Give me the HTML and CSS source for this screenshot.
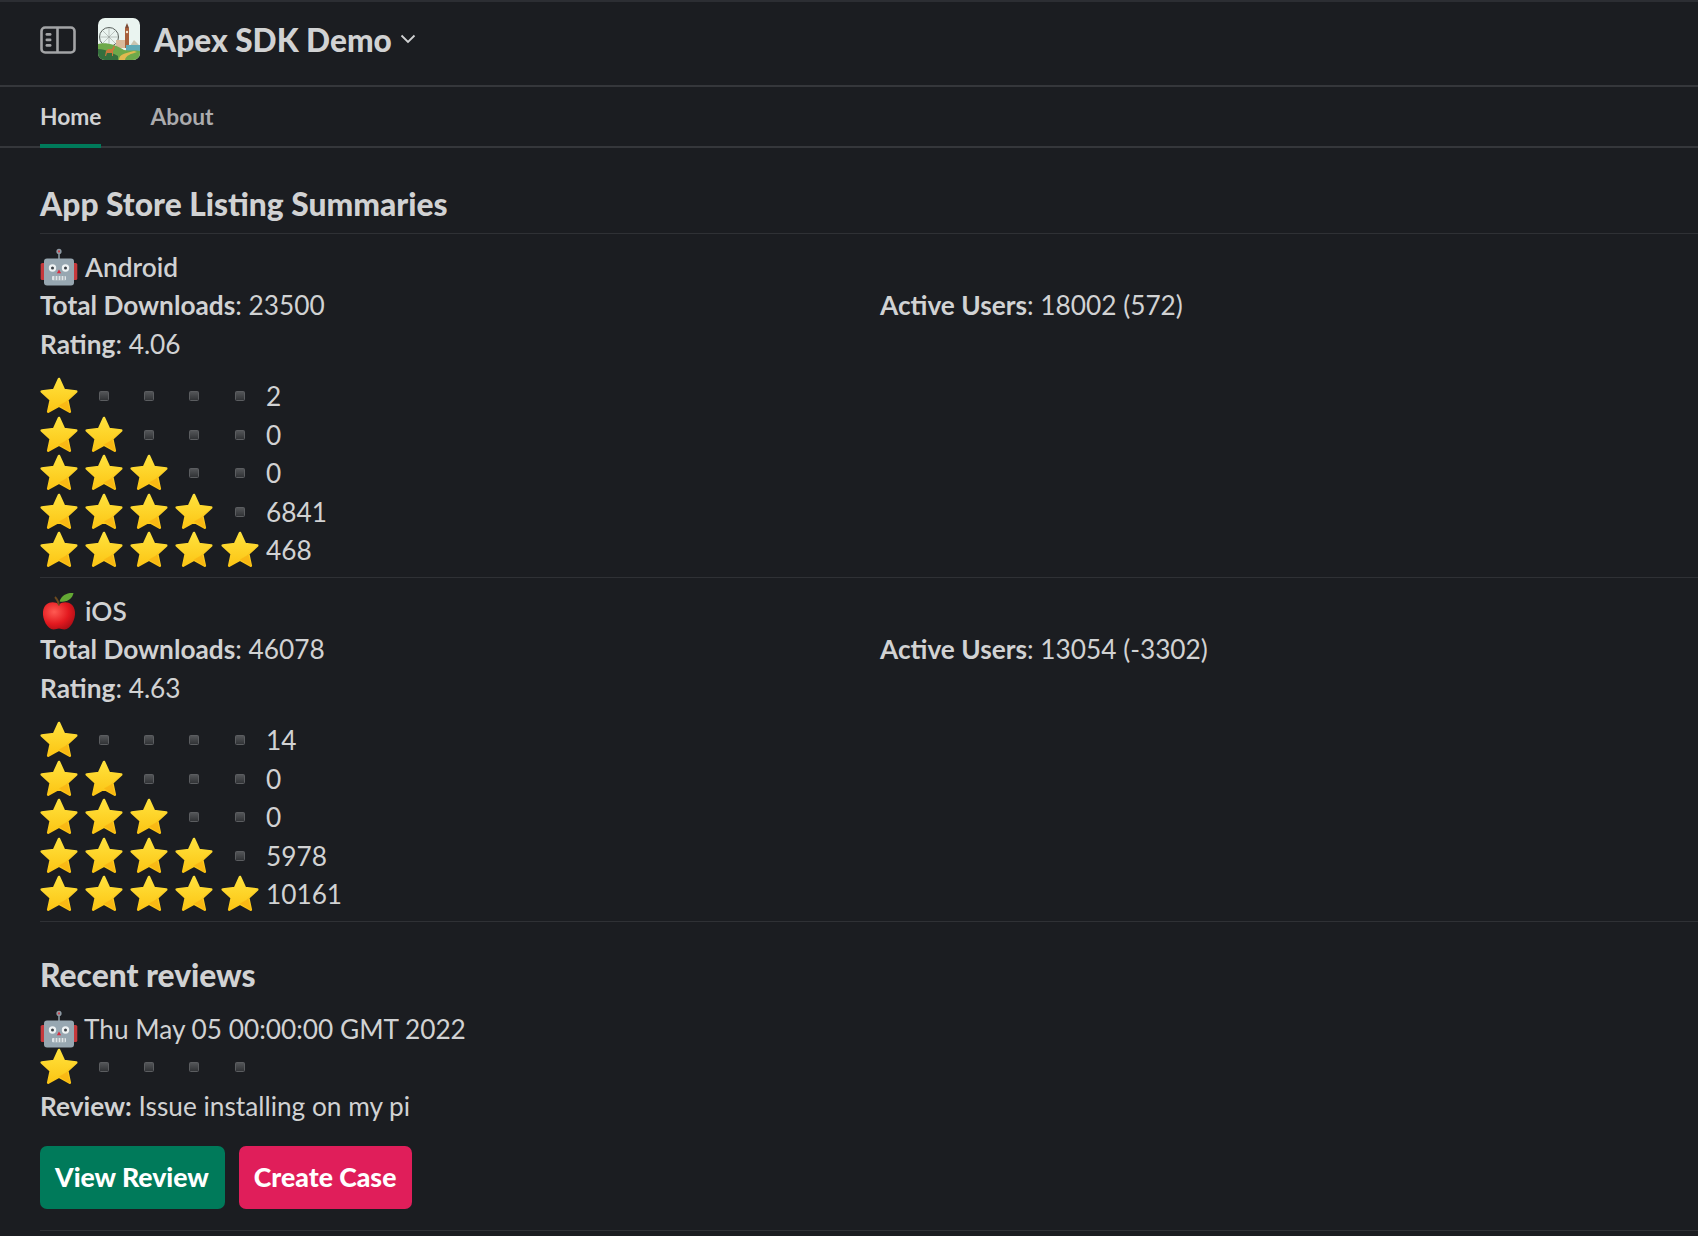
FILE: index.html
```html
<!DOCTYPE html>
<html lang="en">
<head>
<meta charset="utf-8">
<title>Apex SDK Demo</title>
<link rel="stylesheet" href="styles.css">
</head>
<body>
<svg class="defs" width="0" height="0" aria-hidden="true">
  <defs>
    <linearGradient id="starFill" x1="0" y1="0" x2="0" y2="1">
      <stop offset="0" stop-color="#ffe23d"/><stop offset="1" stop-color="#fcc514"/>
    </linearGradient>
    <linearGradient id="squareFill" x1="0" y1="0" x2="0" y2="1">
      <stop offset="0" stop-color="#55575a"/><stop offset="1" stop-color="#2f3134"/>
    </linearGradient>
    <radialGradient id="appleFill" cx="0.35" cy="0.35" r="0.75">
      <stop offset="0" stop-color="#ff5a52"/><stop offset="0.6" stop-color="#e3191f"/><stop offset="1" stop-color="#a80d15"/>
    </radialGradient>
    <symbol id="star" viewBox="0 0 38 38">
      <path d="M19 2 24 13 36.200 14.500 27.200 22.800 29.800 34.700 19 28.600 8.200 34.700 10.800 22.800 1.800 14.500 14 13Z" fill="url(#starFill)" stroke="url(#starFill)" stroke-width="2.600" stroke-linejoin="round"/>
      <path d="M37 14.600 27.200 22.800 30.200 35.200 19 28.600 25.500 24.800Z" fill="#f5a90f" opacity=".55"/>
    </symbol>
    <symbol id="square" viewBox="0 0 10 10">
      <rect x=".5" y=".5" width="9" height="9" rx="1" fill="url(#squareFill)" stroke="#5b5d60"/>
    </symbol>
    <symbol id="robot" viewBox="0 0 38 38">
      <path d="M19 3v8" stroke="#8d9aa3" stroke-width="1.600"/>
      <circle cx="19" cy="3.400" r="2.600" fill="#8d9aa3"/><circle cx="19" cy="3.400" r="1.100" fill="#c9414a"/>
      <rect x=".7" y="15" width="6" height="17" rx="1.600" fill="#c6393c"/>
      <rect x="31.300" y="15" width="6" height="17" rx="1.600" fill="#c6393c"/>
      <rect x="4" y="10.500" width="30" height="27" rx="3" fill="#97a7b1"/>
      <circle cx="12.500" cy="20" r="3.700" fill="#eef2f3"/><circle cx="25.500" cy="20" r="3.700" fill="#eef2f3"/>
      <circle cx="12.500" cy="20" r="1.500" fill="#3c4248"/><circle cx="25.500" cy="20" r="1.500" fill="#3c4248"/>
      <path d="M19 21.500 21.200 25.200H16.800Z" fill="#d92d3f"/>
      <rect x="12" y="28" width="14" height="4.200" rx="1" fill="#dfe5e8"/>
      <path d="M15 28v4.200M18 28v4.200M21 28v4.200M24 28v4.200" stroke="#7f8d96" stroke-width=".9"/>
    </symbol>
    <symbol id="apple" viewBox="0 0 38 38">
      <path d="M19 12.500C14 8.500 4 9.600 3 20c-.7 7 4.400 17.500 10.500 17.500 2.600 0 3.400-1 5.500-1s2.900 1 5.500 1C30.600 37.500 35.700 27 35 20 34 9.600 24 8.500 19 12.500Z" fill="url(#appleFill)"/>
      <path d="M19 13.500C18.500 9.500 17.500 7.500 15 5" fill="none" stroke="#6d4a1e" stroke-width="1.800"/>
      <path d="M19.500 9.500C21.500 3 27 .5 33.500 1 32.500 6.500 26.500 11 19.500 9.500Z" fill="#63a834"/>
    </symbol>
  </defs>
</svg>

<div class="app">
  <header class="topbar">
    <svg class="panel-icon" viewBox="0 0 36 28" aria-hidden="true">
      <rect x="1.500" y="1.500" width="33" height="25" rx="3.600" fill="none" stroke="#a3a4a6" stroke-width="2.600"/>
      <path d="M17.500 1.500v25" stroke="#a3a4a6" stroke-width="2.600"/>
      <rect x="5.500" y="7" width="6" height="2.800" rx="1.400" fill="#a3a4a6"/>
      <rect x="5.500" y="12.500" width="6" height="2.800" rx="1.400" fill="#a3a4a6"/>
      <rect x="5.500" y="18" width="6" height="2.800" rx="1.400" fill="#a3a4a6"/>
    </svg>
    <svg class="app-icon" viewBox="0 0 42 42" aria-hidden="true">
      <defs><clipPath id="iconClip"><rect width="42" height="42" rx="7"/></clipPath></defs>
      <g clip-path="url(#iconClip)">
        <rect width="42" height="42" fill="#eaf4f0"/>
        <circle cx="11" cy="19" r="9.500" fill="none" stroke="#59605c" stroke-width="1"/>
        <path d="M11 9.500v19M1.500 19h19M4.300 12.300l13.400 13.400M17.700 12.300 4.300 25.700" stroke="#8a908c" stroke-width=".5"/>
        <rect x="18" y="22" width="9" height="8" fill="#d9b99a"/>
        <rect x="27" y="10" width="4" height="20" fill="#a8603c"/>
        <path d="M27 10l2-5 2 5Z" fill="#7d4a35"/>
        <circle cx="29" cy="14" r="1.200" fill="#f3ead5"/>
        <path d="M32 28l4-6 6 6Z" fill="#c9c4b0"/>
        <rect x="28" y="27" width="14" height="6" fill="#5fa9b5"/>
        <path d="M0 26c8-2 18 1 26 6 6 1 12 0 16 1v9H0Z" fill="#6ea94a"/>
        <path d="M0 31c8 0 14 4 20 7v4H0Z" fill="#356f3e"/>
        <path d="M21 42c0-6 7-7 15-9l3 1c-6 2-11 3-12 8Z" fill="#e2b94f"/>
        <path d="M7 38l1-5 2-2h4l2-4 1 3-2 3v5h-1v-3H9l-1 3Z" fill="#c9783c"/>
      </g>
    </svg>
    <h1 class="app-title">Apex SDK Demo</h1>
    <svg class="chevron" viewBox="0 0 16 10" aria-hidden="true"><path d="M1.500 1.500 8 8l6.500-6.500" fill="none" stroke="#d1d2d3" stroke-width="1.800"/></svg>
  </header>

  <nav class="tabs">
    <a class="tab tab-active">Home</a>
    <a class="tab">About</a>
  </nav>

  <main class="content">
    <h2 class="section-title">App Store Listing Summaries</h2>

    <section class="listing">
      <div class="platform"><svg class="emoji"><use href="#robot"/></svg><span class="platform-name">Android</span></div>
      <div class="fields">
        <div><b>Total Downloads</b>: 23500</div>
        <div><b>Active Users</b>: 18002 (572)</div>
        <div><b>Rating</b>: 4.06</div>
      </div>
      <div class="ratings">
        <div class="stars"><svg class="emoji"><use href="#star"/></svg><svg class="dot"><use href="#square"/></svg><svg class="dot"><use href="#square"/></svg><svg class="dot"><use href="#square"/></svg><svg class="dot"><use href="#square"/></svg><span class="count">2</span></div>
        <div class="stars"><svg class="emoji"><use href="#star"/></svg><svg class="emoji"><use href="#star"/></svg><svg class="dot"><use href="#square"/></svg><svg class="dot"><use href="#square"/></svg><svg class="dot"><use href="#square"/></svg><span class="count">0</span></div>
        <div class="stars"><svg class="emoji"><use href="#star"/></svg><svg class="emoji"><use href="#star"/></svg><svg class="emoji"><use href="#star"/></svg><svg class="dot"><use href="#square"/></svg><svg class="dot"><use href="#square"/></svg><span class="count">0</span></div>
        <div class="stars"><svg class="emoji"><use href="#star"/></svg><svg class="emoji"><use href="#star"/></svg><svg class="emoji"><use href="#star"/></svg><svg class="emoji"><use href="#star"/></svg><svg class="dot"><use href="#square"/></svg><span class="count">6841</span></div>
        <div class="stars"><svg class="emoji"><use href="#star"/></svg><svg class="emoji"><use href="#star"/></svg><svg class="emoji"><use href="#star"/></svg><svg class="emoji"><use href="#star"/></svg><svg class="emoji"><use href="#star"/></svg><span class="count">468</span></div>
      </div>
    </section>

    <section class="listing">
      <div class="platform"><svg class="emoji"><use href="#apple"/></svg><span class="platform-name">iOS</span></div>
      <div class="fields">
        <div><b>Total Downloads</b>: 46078</div>
        <div><b>Active Users</b>: 13054 (-3302)</div>
        <div><b>Rating</b>: 4.63</div>
      </div>
      <div class="ratings">
        <div class="stars"><svg class="emoji"><use href="#star"/></svg><svg class="dot"><use href="#square"/></svg><svg class="dot"><use href="#square"/></svg><svg class="dot"><use href="#square"/></svg><svg class="dot"><use href="#square"/></svg><span class="count">14</span></div>
        <div class="stars"><svg class="emoji"><use href="#star"/></svg><svg class="emoji"><use href="#star"/></svg><svg class="dot"><use href="#square"/></svg><svg class="dot"><use href="#square"/></svg><svg class="dot"><use href="#square"/></svg><span class="count">0</span></div>
        <div class="stars"><svg class="emoji"><use href="#star"/></svg><svg class="emoji"><use href="#star"/></svg><svg class="emoji"><use href="#star"/></svg><svg class="dot"><use href="#square"/></svg><svg class="dot"><use href="#square"/></svg><span class="count">0</span></div>
        <div class="stars"><svg class="emoji"><use href="#star"/></svg><svg class="emoji"><use href="#star"/></svg><svg class="emoji"><use href="#star"/></svg><svg class="emoji"><use href="#star"/></svg><svg class="dot"><use href="#square"/></svg><span class="count">5978</span></div>
        <div class="stars"><svg class="emoji"><use href="#star"/></svg><svg class="emoji"><use href="#star"/></svg><svg class="emoji"><use href="#star"/></svg><svg class="emoji"><use href="#star"/></svg><svg class="emoji"><use href="#star"/></svg><span class="count">10161</span></div>
      </div>
    </section>

    <h2 class="section-title section-title-reviews">Recent reviews</h2>

    <section class="review">
      <div class="platform platform-review"><svg class="emoji"><use href="#robot"/></svg><span>Thu May 05 00:00:00 GMT 2022</span></div>
      <div class="stars"><svg class="emoji"><use href="#star"/></svg><svg class="dot"><use href="#square"/></svg><svg class="dot"><use href="#square"/></svg><svg class="dot"><use href="#square"/></svg><svg class="dot"><use href="#square"/></svg></div>
      <div class="review-text"><b>Review:</b> Issue installing on my pi</div>
      <div class="actions">
        <button class="btn btn-green" type="button">View Review</button>
        <button class="btn btn-red" type="button">Create Case</button>
      </div>
    </section>
  </main>
</div>
</body>
</html>
```
FILE: styles.css
```css
* { box-sizing: border-box; }

html, body {
  margin: 0;
  height: 100%;
  background: #1b1d21;
}

body {
  color: #d1d2d3;
  font-family: "Lato", "Liberation Sans", sans-serif;
  font-size: 26.25px;
  line-height: 38.5px;
  overflow: hidden;
}

.defs { display: block; height: 0; }

.app { border-top: 2px solid #2c2e33; }

.topbar {
  display: flex;
  align-items: center;
  height: 85px;
  padding: 0 0 9px 40px;
  border-bottom: 2px solid #35373b;
}

.panel-icon { width: 36px; height: 28px; margin: 2px 22px 0 0; flex: none; }
.app-icon { width: 42px; height: 42px; margin-right: 14px; flex: none; }

.app-title {
  margin: 1px 8px 0 0;
  font-size: 31.6px;
  line-height: 42px;
  font-weight: 900;
  color: #d1d2d3;
}

.chevron { width: 16px; height: 10px; flex: none; }

.tabs {
  display: flex;
  gap: 49px;
  height: 61px;
  padding-left: 40px;
  border-bottom: 2px solid #35373b;
}

.tab {
  height: 61px;
  padding-top: 11px;
  font-size: 22.75px;
  line-height: 38px;
  font-weight: 700;
  color: #ababad;
}

.tab-active {
  color: #d1d2d3;
  border-bottom: 4px solid #007a5a;
}

.content { padding-left: 40px; }

.section-title {
  margin: 0;
  padding: 35px 0 8px;
  font-size: 31.75px;
  line-height: 42px;
  font-weight: 900;
  border-bottom: 1px solid #2f3135;
}

.section-title-reviews {
  padding: 32px 0 14px;
  border-bottom: 0;
}

.listing {
  padding: 14px 0 7.5px;
  border-bottom: 1px solid #2f3135;
}

.platform {
  display: flex;
  align-items: center;
  gap: 7px;
  height: 37.5px;
}

.platform-name { font-weight: 600; }

.platform-review { gap: 6px; }

.emoji { width: 38px; height: 38px; flex: none; margin-right: 7.15px; }

.platform .emoji { margin-right: 0; }

.dot { width: 10px; height: 10px; flex: none; margin: 0 21.15px 0 14px; }

.fields {
  display: grid;
  grid-template-columns: 1fr 1fr;
  column-gap: 22px;
  row-gap: 0.5px;
}

.fields b, .review-text b { font-weight: 700; }

.ratings { margin-top: 14px; }

.stars {
  display: flex;
  align-items: center;
  height: 38.5px;
}

.count { margin-left: 0.25px; }

.review { padding: 0 0 21px; border-bottom: 1px solid #2f3135; }

.review-text { margin-top: 1px; }

.actions {
  display: flex;
  gap: 14px;
  margin-top: 20px;
}

.btn {
  height: 63px;
  padding: 0 16px 0 15px;
  border: 0;
  border-radius: 7px;
  color: #fff;
  font-family: inherit;
  font-size: 26.6px;
  font-weight: 900;
}

.btn-green { background: #007a5a; }
.btn-red { background: #e01e5a; }
```
